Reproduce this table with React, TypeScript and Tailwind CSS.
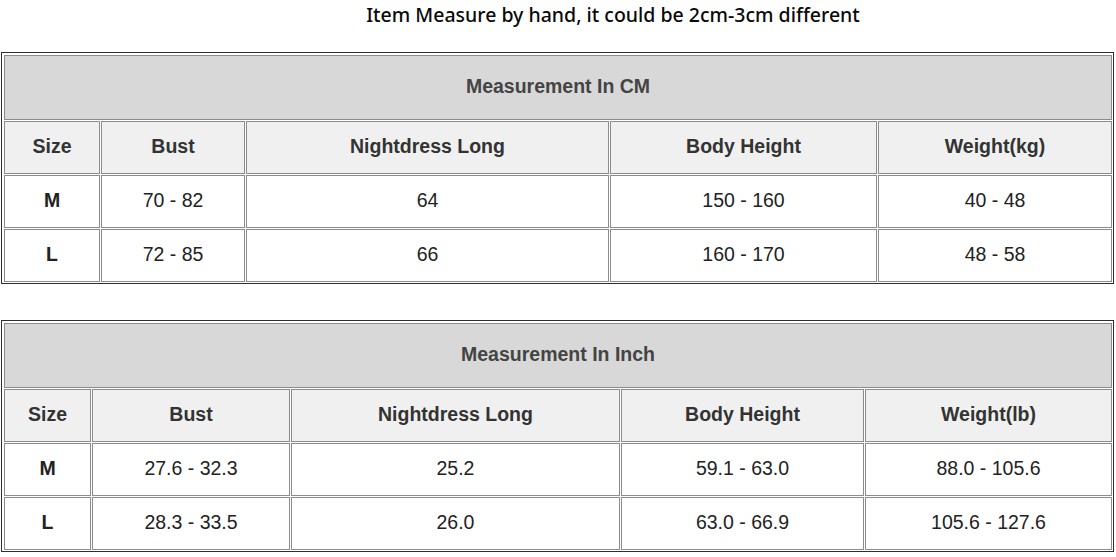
const cmRows = [
  ["M", "70 - 82", "64", "150 - 160", "40 - 48"],
  ["L", "72 - 85", "66", "160 - 170", "48 - 58"],
];

const inchRows = [
  ["M", "27.6 - 32.3", "25.2", "59.1 - 63.0", "88.0 - 105.6"],
  ["L", "28.3 - 33.5", "26.0", "63.0 - 66.9", "105.6 - 127.6"],
];

function SizeTable({
  title,
  cols,
  weightLabel,
  rows,
}: {
  title: string;
  cols: string;
  weightLabel: string;
  rows: string[][];
}) {
  const heads = ["Size", "Bust", "Nightdress Long", "Body Height", weightLabel];
  return (
    <div className="ml-px w-[1113px] border border-[#2e2e2e] bg-white pt-[2px] pl-[2px] pr-px pb-px">
      <div className={`grid gap-px ${cols}`}>
        <div className="col-span-5 flex h-[65px] items-center justify-center border border-[#8c8c8c] bg-[#d8d8d8] pb-[2px] text-[19.5px] font-bold text-[#444]">
          {title}
        </div>
        {heads.map((h) => (
          <div
            key={h}
            className="flex h-[53px] items-center justify-center border border-[#8c8c8c] bg-[#f0f0f0] pb-[2px] text-[19.5px] font-bold text-[#333]"
          >
            {h}
          </div>
        ))}
        {rows.map((r) =>
          r.map((c, i) => (
            <div
              key={r[0] + i}
              className={`flex h-[53px] items-center justify-center border border-[#8c8c8c] bg-white pb-[2px] text-[19.5px] text-[#222] ${
                i === 0 ? "font-bold" : ""
              }`}
            >
              {c}
            </div>
          ))
        )}
      </div>
    </div>
  );
}

export default function App() {
  return (
    <div
      className="h-[557px] w-[1116px] overflow-hidden bg-white"
      style={{ fontFamily: '"Liberation Sans", Arial, sans-serif' }}
    >
      <div
        className="pt-[3px] pl-[110px] text-center text-[19.5px] font-medium leading-6 text-[#0a0a0a]"
        style={{ fontFamily: '"Noto Sans", sans-serif' }}
      >
        Item Measure by hand, it could be 2cm-3cm different
      </div>
      <div className="mt-[25px]">
        <SizeTable
          title="Measurement In CM"
          cols="grid-cols-[96px_144px_363px_267px_234px]"
          weightLabel="Weight(kg)"
          rows={cmRows}
        />
      </div>
      <div className="mt-[36px]">
        <SizeTable
          title="Measurement In Inch"
          cols="grid-cols-[87px_198px_329px_243px_247px]"
          weightLabel="Weight(lb)"
          rows={inchRows}
        />
      </div>
    </div>
  );
}
